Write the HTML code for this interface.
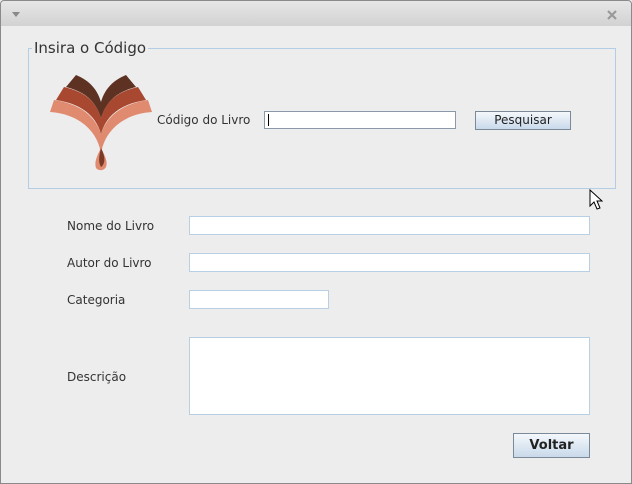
<!DOCTYPE html><html><head><style>
body{margin:0;width:632px;height:484px;overflow:hidden;background:#ededed;font-family:"DejaVu Sans","Liberation Sans",sans-serif;}
.win{position:absolute;left:0;top:0;width:630px;height:482px;border:1px solid #8a8a8a;border-radius:4px 4px 0 0;background:#ededed;}
.tb{position:absolute;left:0;top:0;width:630px;height:25px;background:linear-gradient(#e6e6e6,#d2d2d2);border-radius:4px 4px 0 0;}
.a{position:absolute;}
.f{position:absolute;background:#fff;border:1px solid #b8cfe5;box-sizing:border-box;}
.l{position:absolute;font-size:12px;color:#333;}
.btn{position:absolute;box-sizing:border-box;border:1px solid #7a8a99;background:linear-gradient(#f4f8fc,#c9d9ea);font-size:12px;text-align:center;color:#222;}
</style></head><body>
<div class="win">
<div class="tb"></div>
<svg class="a" style="left:10px;top:9px" width="10" height="8"><path d="M1 2h8L5 7z" fill="#888"/></svg>
<svg class="a" style="left:606px;top:9px" width="10" height="10"><path d="M1 1l8 8M9 1l-8 8" stroke="#999" stroke-width="2.2"/></svg>
<div class="a" style="left:27px;top:47px;width:586px;height:139px;border:1px solid #b4cde6;"></div>
<div class="a" style="left:31px;top:38px;background:#ededed;padding:0 2px;font-size:15px;color:#333;">Insira o Código</div>
<svg class="a" style="left:49px;top:73px" width="102" height="98" viewBox="0 0 102 98">
<path d="M0 38 C30 40 48 58 51 80 C54 58 72 40 102 38 L98 26 C70 30 56 44 51 60 C46 44 32 30 4 26Z" fill="#e08a70"/>
<path d="M6 26 C32 30 46 42 51 60 C56 42 70 30 96 26 L88 13 C66 18 56 28 51 44 C46 28 36 18 14 13Z" fill="#a84830"/>
<path d="M16 13 C36 18 46 28 51 44 C56 28 66 18 86 13 L76 1 C64 6 55 14 51 28 C47 14 38 6 26 1Z" fill="#5e3222"/>
<path d="M51 74 C47 82 44 88 46 94 C48 97 54 97 56 93 C58 88 55 82 51 74Z" fill="#e08a70"/>
<path d="M51 74 C49 82 48 88 51 93 C55 90 56 84 51 74Z" fill="#7a3a26"/>
</svg>
<div class="l" style="left:156px;top:112px">Código do Livro</div>
<div class="f" style="left:263px;top:110px;width:192px;height:18px;border-color:#8a9aaa"><div style="position:absolute;left:3px;top:2px;width:1px;height:12px;background:#000"></div></div>
<div class="btn" style="left:474px;top:110px;width:96px;height:19px;line-height:17px">Pesquisar</div>
<svg class="a" style="left:588px;top:188px" width="14" height="22"><path d="M1 1v16l4-4 3 7 3-1-3-7h5z" fill="#fff" stroke="#000"/></svg>
<div class="l" style="left:66px;top:218px">Nome do Livro</div>
<div class="f" style="left:188px;top:215px;width:401px;height:19px"></div>
<div class="l" style="left:66px;top:255px">Autor do Livro</div>
<div class="f" style="left:188px;top:252px;width:401px;height:19px"></div>
<div class="l" style="left:66px;top:292px">Categoria</div>
<div class="f" style="left:188px;top:289px;width:140px;height:19px"></div>
<div class="l" style="left:66px;top:369px">Descrição</div>
<div class="f" style="left:188px;top:336px;width:401px;height:78px"></div>
<div class="btn" style="left:512px;top:432px;width:77px;height:25px;line-height:23px;font-weight:bold;font-size:13px">Voltar</div>
</div>
</body></html>
